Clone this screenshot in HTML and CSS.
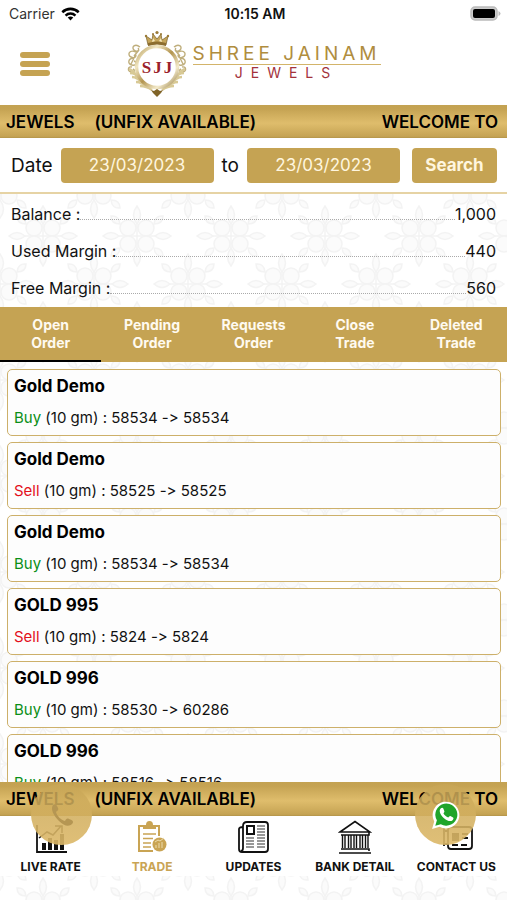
FILE: index.html
```html
<!DOCTYPE html>
<html lang="en">
<head>
<meta charset="utf-8">
<meta name="viewport" content="width=device-width, initial-scale=1">
<title>Shree Jainam Jewels</title>
<link rel="stylesheet" href="styles.css">
</head>
<body>
<div class="app">
  <div class="status">
    <span class="carrier">Carrier
      <svg class="wifi" viewBox="0 0 20 15" aria-hidden="true"><g fill="none" stroke="#000" stroke-width="2.7"><path d="M1.200 5.600C6.200 .8 13.800 .8 18.800 5.600"/><path d="M4.700 9.200c3-2.900 7.600-2.900 10.600 0"/></g><path d="M7 11.300c1.800-1.500 4.200-1.500 6 0L10 14.500z"/></svg>
    </span>
    <span class="clock">10:15 AM</span>
    <svg class="battery" viewBox="0 0 31 15" aria-hidden="true"><rect x="1" y="1" width="26" height="13" rx="4" fill="#ccc" stroke="#bbb" stroke-width="1.500"/><rect x="3" y="3" width="22" height="9" rx="2"/><path d="M28.500 5v5q2-1 2-2.500t-2-2.500" fill="#bbb"/></svg>
  </div>

  <header class="header">
    <button class="menu" aria-label="Menu"><span></span><span></span><span></span></button>
    <div class="brand">
      <svg class="crest" viewBox="0 0 60 68" role="img" aria-label="SJJ">
        <defs>
          <linearGradient id="ring" x1="0" y1="0" x2="1" y2="1"><stop offset="0" stop-color="#b49a58"/><stop offset=".25" stop-color="#f1e6c2"/><stop offset=".5" stop-color="#b39550"/><stop offset=".75" stop-color="#f4ebcc"/><stop offset="1" stop-color="#8f7439"/></linearGradient>
          <g id="scroll" fill="none" stroke="#bfae7c" stroke-width="1.400">
            <path d="M13 17c-5-4-9 0-6 3s6 0 4-2M9 22c-7-3-9 3-5 5s6-1 4-3M7 28c-6 0-7 6-2 7s5-3 2-4M5 37c-4-1-5 4-1 5s4-2 2-3M12 20l-5 6M8 26l-4 8"/>
            <path d="M3 43c4 0 8 3 10 6M5 47c4 0 8 3 11 6M9 52c4 0 8 2 11 5M13 56c5 0 8 1 12 4M2 39c3 1 6 4 8 8" stroke="#d8c995" stroke-width="2.400"/>
          </g>
        </defs>
        <use href="#scroll"/>
        <use href="#scroll" transform="matrix(-1 0 0 1 60 0)"/>
        <circle cx="30" cy="37" r="20.500" fill="#fff" stroke="url(#ring)" stroke-width="3.500"/>
        <path d="M21 15L19 6l6 4 1-6 4 5 4-5 1 6 6-4-2 9q-9-3-18 0" fill="#c5a55a" stroke="#765b24" stroke-width=".7"/>
        <path d="M21 13q9-3 18 0v3q-9-3-18 0z" fill="#8c6d2e"/>
        <path d="M25 12l1-4 2 3zm10 0l-1-4-2 3z" fill="#f5e8bd"/>
        <g fill="#9b7b38"><circle cx="30" cy="2.500" r="1.600"/><circle cx="26" cy="4" r="1"/><circle cx="34" cy="4" r="1"/><circle cx="19" cy="6" r="1.200"/><circle cx="41" cy="6" r="1.200"/></g>
        <path d="M30 59l3 2 3-1-2 3-4 4-4-4-2-3 3 1z" fill="#806428"/>
        <text x="31" y="43" text-anchor="middle" class="monogram">SJJ</text>
      </svg>
      <div class="wordmark"><span class="name">SHREE JAINAM</span><span class="sub">JEWELS</span></div>
    </div>
  </header>

  <div class="ticker"><span>JEWELS</span><span>(UNFIX AVAILABLE)</span><span class="next">WELCOME TO</span></div>

  <form class="dates">
    <label for="from">Date</label>
    <input id="from" type="text" value="23/03/2023">
    <label for="to">to</label>
    <input id="to" type="text" value="23/03/2023">
    <button type="button">Search</button>
  </form>

  <dl class="summary">
    <div><dt>Balance :</dt><dd>1,000</dd></div>
    <div><dt>Used Margin :</dt><dd>440</dd></div>
    <div><dt>Free Margin :</dt><dd>560</dd></div>
  </dl>

  <div class="tabs">
    <button class="active">Open<br>Order</button>
    <button>Pending<br>Order</button>
    <button>Requests<br>Order</button>
    <button>Close<br>Trade</button>
    <button>Deleted<br>Trade</button>
  </div>

  <main class="orders">
    <article><h2>Gold Demo</h2><p><b class="buy">Buy</b> (10 gm) : 58534 -&gt; 58534</p></article>
    <article><h2>Gold Demo</h2><p><b class="sell">Sell</b> (10 gm) : 58525 -&gt; 58525</p></article>
    <article><h2>Gold Demo</h2><p><b class="buy">Buy</b> (10 gm) : 58534 -&gt; 58534</p></article>
    <article><h2>GOLD 995</h2><p><b class="sell">Sell</b> (10 gm) : 5824 -&gt; 5824</p></article>
    <article><h2>GOLD 996</h2><p><b class="buy">Buy</b> (10 gm) : 58530 -&gt; 60286</p></article>
    <article><h2>GOLD 996</h2><p><b class="buy">Buy</b> (10 gm) : 58516 -&gt; 58516</p></article>
  </main>

  <footer class="bottom">
    <div class="ticker"><span>JEWELS</span><span>(UNFIX AVAILABLE)</span><span class="next">WELCOME TO</span></div>
    <nav class="nav">
      <a href="#rate">
        <svg viewBox="0 0 34 34" aria-hidden="true"><g fill="none" stroke="#111" stroke-width="1.800"><path d="M3 5v27h30"/><path d="M5 18l8-6 6 3 8-9M21 6h7v7" stroke-width="1.500"/></g><path d="M8 23h4v7H8zm6-5h4v12h-4zm6 2h4v10h-4zm6-6h4v16h-4z" fill="#111"/></svg>
        LIVE RATE</a>
      <a href="#trade" class="current">
        <svg viewBox="0 0 34 34" aria-hidden="true"><g fill="none" stroke="#c9a454" stroke-width="2"><path d="M10 6H4v25h14M20 6h4v10"/><path d="M8 14h13M8 18.500h10M8 23h8M8 27h8" stroke-width="1.500"/></g><path d="M8 9V5h3q0-4 3.500-4T18 5h3v4z" fill="#c9a454"/><circle cx="24.500" cy="24.500" r="7" fill="#c9a454"/><path d="M21 28v-3m3 3v-5m3 5v-6m-7 0l3-2 2 1 4-3" fill="none" stroke="#ecdcae"/></svg>
        TRADE</a>
      <a href="#updates">
        <svg viewBox="0 0 34 34" aria-hidden="true"><g fill="none" stroke="#111" stroke-width="1.800"><path d="M7 6q0-4 4-4h18q3 0 3 3v24q0 3-3 3H6q-3 0-3-3V9q0-2 4-2zM7 6v22q0 3-2 3"/><rect x="11" y="6" width="7" height="8" stroke-width="2"/></g><path d="M21 6h8m-8 3h8m-8 3h8m-8 3h8M10 18h8m3 0h8m-19 3h8m3 0h8m-19 3h8m3 0h8m-19 3h8m3 0h8" stroke="#333" fill="none" stroke-width="1.200"/></svg>
        UPDATES</a>
      <a href="#bank">
        <svg viewBox="0 0 34 34" aria-hidden="true"><g fill="none" stroke="#111" stroke-width="1.600"><path d="M2 12L17 1.500 32 12zM3 15h28v-3M3 29h28v2M1 33h32"/><path d="M4.500 15v13M7 15v13M10.500 15v13M13 15v13M16 15v13M18.500 15v13M22 15v13M24.500 15v13M27.500 15v13M30 15v13" stroke-width="1.400"/></g></svg>
        BANK DETAIL</a>
      <a href="#contact">
        <svg viewBox="0 0 34 34" aria-hidden="true"><g fill="none" stroke="#111" stroke-width="1.800"><rect x="9" y="7" width="24" height="22" rx="3"/><path d="M5 4v22M9 11h-3M9 24H6"/><path d="M23 14h6m-6 4h6m-16 7h6m3 0h6"/></g><path d="M13 13h7v8h-7z" fill="#111"/></svg>
        CONTACT US</a>
    </nav>
    <button class="float call" aria-label="Call"><svg viewBox="0 0 24 24" aria-hidden="true"><path d="M3 2c2-2 4 0 5 3 1 2-1 3-2 4 1 4 5 8 9 9 1-2 2-3 4-2 4 1 5 3 3 5-3 3-8 2-13-3S0 6 3 2z" fill="#b59653"/></svg></button>
    <button class="float chat" aria-label="WhatsApp"><svg viewBox="0 0 28 28" aria-hidden="true"><path d="M1 27l2-7a12.500 12.500 0 1 1 5 5z" fill="#fff"/><path d="M4 24l1.500-5a10.300 10.300 0 1 1 3.700 3.600z" fill="#20a52b"/><path d="M9 8c1-1 2-1 2.500 0l1 2.500c.3.700-.8 1.500-.9 1.900 1 2 2.500 3.200 4.500 4 .7-.4 1.200-1.600 2-1.400l2.500 1.300c1 .6 0 2.400-1 3-2 1-5-.1-8-2.800s-4.500-6.500-2.600-8.500z" fill="#fff"/></svg></button>
  </footer>
</div>
</body>
</html>
```
FILE: styles.css
```css
* { box-sizing: border-box; }

:root {
  --gold: #c5a353;
  --bar: linear-gradient(#c3a252, #c5a353 12%, #dfbd6c 55%, #c5a353 95%, #b39449);
}

body {
  margin: 0;
  font-family: Inter, "Liberation Sans", sans-serif;
  font-feature-settings: "calt" 0;
  color: #111;
  background-color: #fff;
  background-image: url("data:image/svg+xml,%3Csvg xmlns='http://www.w3.org/2000/svg' xmlns:xlink='http://www.w3.org/1999/xlink' width='94' height='96'%3E%3Cdefs%3E%3Cg id='f' fill='%23fbfbfb' stroke='%23f3f3f3' stroke-width='1.500'%3E%3Cpath d='M-26-20q8-1 9 8-9 0-9-8zM26-20q-8-1-9 8 9 0 9-8zM-26 20q8 1 9-8-9 0-9 8zM26 20q-8 1-9-8 9 0 9 8z'/%3E%3Cpath d='M0-30q-7 9 0 18 7-9 0-18zM0 30q-7-9 0-18 7 9 0 18zM-34 0q8-7 16 0-8 7-16 0zM34 0q-8-7-16 0 8 7 16 0z'/%3E%3Ccircle cx='-9' cy='-8' r='8'/%3E%3Ccircle cx='9' cy='-8' r='8'/%3E%3Ccircle cx='-9' cy='8' r='8'/%3E%3Ccircle cx='9' cy='8' r='8'/%3E%3Cpath d='M0-12v24M-18 0h36'/%3E%3C/g%3E%3C/defs%3E%3Cuse xlink:href='%23f' x='43' y='44'/%3E%3Cuse xlink:href='%23f' x='0' y='92'/%3E%3Cuse xlink:href='%23f' x='94' y='92'/%3E%3Cuse xlink:href='%23f' x='0' y='-4'/%3E%3Cuse xlink:href='%23f' x='94' y='-4'/%3E%3C/svg%3E");
}

button, input { font: inherit; border: 0; margin: 0; padding: 0; }
button { cursor: pointer; }

.app { display: flex; flex-direction: column; height: 100vh; }

.status {
  display: grid;
  grid-template-columns: 1fr auto 1fr;
  align-items: center;
  height: 27px;
  padding: 0 6px 0 9px;
  background: #fff;
  font-size: 14px;
}
.carrier { display: flex; align-items: center; gap: 6px; color: #333; }
.wifi { width: 19px; height: 14px; }
.clock { font-weight: 600; }
.battery { width: 31px; height: 15px; justify-self: end; }

.header {
  display: grid;
  grid-template-columns: 1fr auto 1fr;
  align-items: center;
  height: 78px;
  padding: 0 20px 5px;
  background: #fff;
}
.menu { display: flex; flex-direction: column; gap: 3px; width: 30px; background: none; }
.menu span { height: 6px; border-radius: 3px; background: var(--gold); }
.brand { display: flex; align-items: center; gap: 6px; }
.crest { width: 60px; height: 68px; }
.monogram { font: bold 17px "Liberation Serif", serif; letter-spacing: 2px; fill: #9b1f2c; }
.wordmark { display: flex; flex-direction: column; align-items: center; padding-bottom: 2px; }
.name {
  border-bottom: 1px solid #d3b46a;
  color: #b08d3e;
  font-size: 19px;
  line-height: 20px;
  letter-spacing: 4px;
}
.sub { color: #a3323c; font-size: 14px; line-height: 16px; letter-spacing: 8px; }

.ticker {
  display: flex;
  align-items: center;
  gap: 20px;
  height: 33px;
  padding: 0 9px 0 6px;
  background: var(--bar);
  color: #000;
  font-size: 17px;
  font-weight: 600;
  white-space: nowrap;
}
.bottom .ticker { height: 34px; }
.next { margin-left: auto; }

.dates {
  display: grid;
  grid-template-columns: auto 1fr auto 1fr 89px;
  align-items: center;
  gap: 8px;
  height: 56px;
  padding: 0 10px 0 11px;
  border-bottom: 2px solid #e6d3a4;
  background: #fff;
  font-size: 19px;
}
.dates input {
  width: 100%;
  min-width: 0;
  height: 35px;
  border-radius: 4px;
  background: var(--gold);
  color: #fff6df;
  font-size: 17px;
  text-align: center;
}
.dates button {
  height: 35px;
  margin-left: 4px;
  border-radius: 4px;
  background: var(--gold);
  color: #fff6df;
  font-size: 17px;
  font-weight: 700;
}

.summary { margin: 0; padding: 1px 11px; font-size: 16px; }
.summary div { display: flex; align-items: center; height: 37px; }
.summary div::before { content: ""; order: 1; flex: 1; height: 12px; border-bottom: 1px dotted #aaa; }
.summary dt { order: 0; }
.summary dd { order: 2; margin: 0; }

.tabs { display: grid; grid-template-columns: repeat(5, 1fr); background: var(--gold); }
.tabs button {
  height: 55px;
  border-bottom: 2px solid transparent;
  background: none;
  color: #fffaf0;
  font-size: 14px;
  font-weight: 700;
  line-height: 18px;
}
.tabs .active { border-color: #000; }

.orders {
  flex: 1;
  min-height: 0;
  display: flex;
  flex-direction: column;
  gap: 6px;
  padding: 7px 6px 0 7px;
  overflow: hidden;
}
.orders article {
  flex: none;
  padding: 5px 6px;
  border: 1px solid #cdb06a;
  border-radius: 5px;
  background: #fdfdfd;
}
.orders h2 { margin: 0 0 9px; color: #000; font-size: 17px; line-height: 22px; font-weight: 700; }
.orders p { margin: 0; font-size: 15px; line-height: 24px; }
.orders b { font-weight: 400; }
.buy { color: #0a8f16; }
.sell { color: #e3101c; }

.bottom { position: relative; padding-bottom: 24px; }
.nav { display: grid; grid-template-columns: repeat(5, 1fr); height: 60px; background: #fff; }
.nav a {
  display: flex;
  flex-direction: column;
  align-items: center;
  gap: 4px;
  padding-top: 4px;
  color: #111;
  font-size: 12px;
  font-weight: 700;
  line-height: 18px;
  text-decoration: none;
  white-space: nowrap;
}
.nav svg { width: 34px; height: 34px; }
.nav .current { color: #c9a454; }

.float {
  position: absolute;
  top: 2px;
  display: grid;
  place-items: center;
  width: 61px;
  height: 61px;
  border-radius: 50%;
  background: linear-gradient(rgba(200, 166, 86, 0.85), rgba(220, 184, 104, 0.9));
}
.call { left: 31px; }
.chat { right: 31px; }
.call svg { width: 24px; height: 24px; }
.chat svg { width: 30px; height: 30px; }
```
